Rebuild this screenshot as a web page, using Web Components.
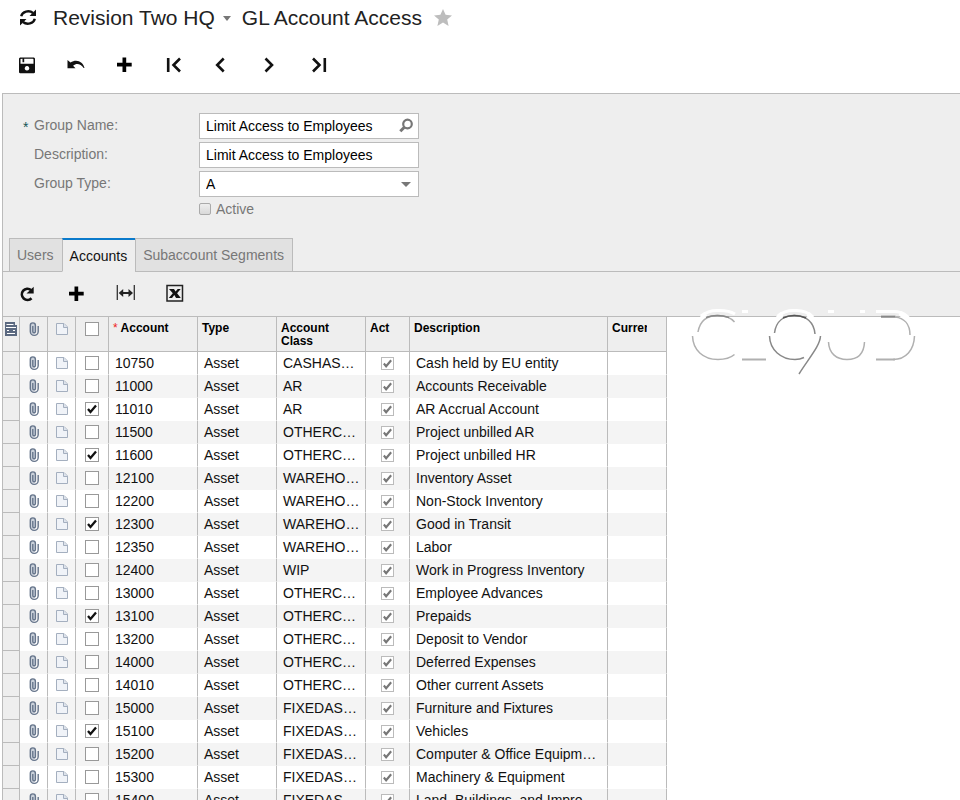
<!DOCTYPE html>
<html lang="en">
<head>
<meta charset="utf-8">
<title>GL Account Access</title>
<style>
html, body { margin: 0; height: 100%; }
body { font-family: "Liberation Sans", Arial, sans-serif; font-size: 14px; color: #111; background: #fff; overflow: hidden; }
</style>
</head>
<body>
<gl-app></gl-app>
<script>
const define = (name, html, setup) => {
  const t = document.createElement('template');
  t.innerHTML = html;
  customElements.define(name, class extends HTMLElement {
    connectedCallback() {
      if (this.shadowRoot) return;
      const root = this.attachShadow({ mode: 'open' });
      root.append(t.content.cloneNode(true));
      if (setup) setup.call(this, root);
    }
  });
};

const ICONS = {
  cycle: '<path fill="none" stroke="#111" stroke-width="2.300" d="M5.200 10.200A7 6 0 0 1 17 7M18.800 12.800A7 6 0 0 1 7 16"/><path d="M20 3.500V10h-6.500zM4 19.500V13h6.500z" fill="#111"/>',
  star: '<path d="M12 3l2.600 5.800 6.400.600-4.800 4.200 1.400 6.400-5.600-3.400L6.400 20l1.400-6.400L3 9.400l6.400-.600z" fill="#bdbdbd"/>',
  save: '<path fill-rule="evenodd" fill="#111" d="M5 4.500h14l1 1v14l-1 .700H5l-1-.700v-14zM5.500 6v4.700h13V6.200l-.800-.500H9.200v3.600H7.500V5.700zM12 13a2.300 2.300 0 1 0 .010 0z"/>',
  undo: '<path fill="#111" d="M3.500 7v8.300h8l-2.400-2.500c3.500-3 7.400-2 10.600 2.200h.800c-1.300-6.500-8-9.500-14-5.600z"/>',
  plus: '<path fill="#000" d="M9.500 4.500h3.700v5.300h5.500v3.700h-5.500V19H9.500v-5.500H4V9.800h5.500z"/>',
  first: '<path fill="none" stroke="#111" stroke-width="2.600" d="M6.200 5v14M18 5.500L11.500 12l6.500 6.500"/>',
  prev: '<path fill="none" stroke="#111" stroke-width="2.600" d="M12.700 5.500L6.200 12l6.500 6.500"/>',
  next: '<path fill="none" stroke="#111" stroke-width="2.600" d="M5.500 5.500L12 12l-6.500 6.500"/>',
  last: '<path fill="none" stroke="#111" stroke-width="2.600" d="M4 5.500L10.500 12 4 18.500M15.800 5v14"/>',
  reload: '<path fill="none" stroke="#111" stroke-width="2.700" d="M15.500 16.300a5.600 5.600 0 1 1-.500-8.300"/><path d="M17.700 4.800V11.500H10.500z" fill="#111"/>',
  fit: '<path fill="none" stroke="#333" stroke-width="1.300" d="M3.300 3v15M20.300 3v15"/><path stroke="#222" stroke-width="2" d="M7 11h10"/><path fill="#222" d="M4.700 11l4.500-4v8zM19 11l-4.500-4v8z"/>',
  excel: '<path fill="none" stroke="#222" stroke-width="1.500" d="M4 3.500h15.500v15.500H4z"/><path fill="#111" d="M6 7h5l1.600 2.600L14.700 7h3l-3.600 4.200 3.700 4.800h-4.700L11.300 13 9 16H5.800l4-4.700z"/>',
  search: '<circle cx="13.500" cy="10" r="4.300" fill="none" stroke="#777" stroke-width="2.200"/><path d="M10.300 13.200L6.300 17.200" stroke="#777" stroke-width="3"/>',
  clip: '<rect x="8" y="6" width="5.500" height="11.500" rx="2.700" fill="#c9d0da"/><path fill="none" stroke="#66758b" stroke-width="1.400" d="M10.800 9v5.500a1.300 1.300 0 0 0 2.600 0V8.400a2.500 2.500 0 0 0-5.100 0v6a3.900 3.900 0 0 0 7.900 0V9"/>',
  note: '<path fill="#f0f3f8" stroke="#a4afbf" stroke-width="1" d="M6.500 6.500h7.500l3.500 3.500v7.500h-11z"/><path fill="#dde3ec" stroke="#a4afbf" d="M13.500 6.500v4h4"/>',
  layout: '<path fill="#5b6980" d="M6 5h10v3h2v3H6zM6 11h12v8H6z"/><path stroke="#fff" d="M7.500 7.500h7M7 10.500h10M8 13.500h8M8 16.500h8"/><path fill="#5b6980" d="M10 12.500h4v1.500h-4z"/>'
};

define('ui-icon', `<style>:host{display:block;width:24px;height:24px;flex:none}svg{display:block;width:100%;height:100%}</style>`, function (r) {
  const d = document.createElement('template');
  d.innerHTML = `<svg viewBox="0 0 24 24" aria-hidden="true">${ICONS[this.getAttribute('name')]}</svg>`;
  r.append(d.content);
});

define('tool-button', `<style>
:host{display:block}
button{display:flex;align-items:center;justify-content:center;width:49px;height:32px;padding:0;border:0;background:none;cursor:pointer}
</style><button type="button"><slot></slot></button>`, function (r) {
  r.querySelector('button').setAttribute('aria-label', this.getAttribute('label'));
});

define('page-title', `<style>
:host{display:flex;align-items:center;height:36px;padding-left:16px;font-size:21px;line-height:24px;color:#222}
button{font:inherit;color:inherit;border:0;background:none;padding:0;display:flex;align-items:center;cursor:pointer}
ui-icon{height:28px}
.company{margin-left:13px;gap:8px}
.company i{border:4px solid transparent;border-top:5px solid #777;border-bottom:0}
h1{font:inherit;margin:0 9px 0 11px}
</style>
<button type="button" aria-label="Refresh page"><ui-icon name="cycle"></ui-icon></button>
<button type="button" class="company">Revision Two HQ<i></i></button>
<h1>GL Account Access</h1>
<button type="button" aria-label="Add to favorites"><ui-icon name="star"></ui-icon></button>`);

define('tool-bar', `<style>:host{display:flex;align-items:center}</style><slot></slot>`);

define('form-field', `<style>
:host{display:grid;grid-template-columns:165px 220px;color:#777;line-height:24px}
label::before{content:attr(data-mark);position:absolute;margin-left:-11px;line-height:28px;color:#155}
.box{position:relative;height:26px}
input,select{box-sizing:border-box;width:100%;height:100%;margin:0;padding:0 6px;border:1px solid #bbb;border-radius:0;background:#fff;font:inherit;color:#000;appearance:none;outline:0}
button,i{position:absolute;right:0;top:0}
button{padding:1px;border:0;background:none}
i{right:8px;top:11px;border:5px solid transparent;border-top-color:#777;border-bottom:0;pointer-events:none}
</style><label for="f"></label><div class="box"></div>`, function (r) {
  const label = r.querySelector('label'), box = r.querySelector('.box');
  const value = this.getAttribute('value'), type = this.getAttribute('type');
  label.textContent = this.getAttribute('label');
  if (this.hasAttribute('required')) label.dataset.mark = '*';
  if (type === 'select') box.innerHTML = `<select id="f"><option>${value}</option></select><i></i>`;
  else box.innerHTML = `<input id="f" type="text" value="${value}">` +
    (type === 'lookup' ? '<button type="button" aria-label="Look up"><ui-icon name="search"></ui-icon></button>' : '');
});

define('active-box', `<style>
:host{display:block;padding-left:165px;color:#777;line-height:18px}
label{display:inline-flex;align-items:center;gap:5px}
input{appearance:none;box-sizing:border-box;width:12px;height:12px;margin:0;border:1px solid #aaa;border-radius:2px;background:linear-gradient(#eee,#d9d9d9)}
</style><label><input type="checkbox">Active</label>`);

define('group-form', `<style>
:host{display:flex;flex-direction:column;gap:3px;padding:19px 0 19px 31px}
</style>
<form-field label="Group Name:" value="Limit Access to Employees" type="lookup" required></form-field>
<form-field label="Description:" value="Limit Access to Employees"></form-field>
<form-field label="Group Type:" value="A" type="select"></form-field>
<active-box></active-box>`);

define('tab-strip', `<style>
:host{display:flex;height:34px;padding-left:6px;box-shadow:inset 0 -1px #bbb}
button{font:inherit;color:#777;background:#e1e1e1;border:1px solid #bbb;padding:0 8px 0 7px;margin:0 0 0 -1px}
button:first-child{margin:0}
button[aria-selected=true]{background:#eee;color:#111;border-top:2px solid #0a7acb;border-bottom-color:#eee}
:host>div,div{display:flex}
</style><div role="tablist"><button role="tab">Users</button><button role="tab" aria-selected="true">Accounts</button><button role="tab">Subaccount Segments</button></div>`);

const ROWS = [
  ['10750', 'CASHAS…', 'Cash held by EU entity'],
  ['11000', 'AR', 'Accounts Receivable'],
  ['11010', 'AR', 'AR Accrual Account', 1],
  ['11500', 'OTHERC…', 'Project unbilled AR'],
  ['11600', 'OTHERC…', 'Project unbilled HR', 1],
  ['12100', 'WAREHO…', 'Inventory Asset'],
  ['12200', 'WAREHO…', 'Non-Stock Inventory'],
  ['12300', 'WAREHO…', 'Good in Transit', 1],
  ['12350', 'WAREHO…', 'Labor'],
  ['12400', 'WIP', 'Work in Progress Inventory'],
  ['13000', 'OTHERC…', 'Employee Advances'],
  ['13100', 'OTHERC…', 'Prepaids', 1],
  ['13200', 'OTHERC…', 'Deposit to Vendor'],
  ['14000', 'OTHERC…', 'Deferred Expenses'],
  ['14010', 'OTHERC…', 'Other current Assets'],
  ['15000', 'FIXEDAS…', 'Furniture and Fixtures'],
  ['15100', 'FIXEDAS…', 'Vehicles', 1],
  ['15200', 'FIXEDAS…', 'Computer &amp; Office Equipm…'],
  ['15300', 'FIXEDAS…', 'Machinery &amp; Equipment'],
  ['15400', 'FIXEDAS…', 'Land, Buildings, and Impro…']
];

define('account-grid', `<style>
:host{display:block;background:#fff;border-top:1px solid #bbb;color:#111}
table{border-collapse:separate;border-spacing:0;table-layout:fixed;width:664px}
th,td{box-sizing:border-box;padding:0;border-right:1px solid #bbb;overflow:hidden;white-space:nowrap;text-align:left}
th{height:35px;background:#eee;border-bottom:1px solid #bbb;font-size:12px;line-height:13px;color:#000;vertical-align:top;padding:5px 0 0 4px}
th.ic{padding:0;text-align:center}
th.clip div{width:35px;overflow:hidden}
th b{color:#e22;font-weight:normal}
td{height:23px;line-height:22px;padding-left:6px;border-bottom:1px solid #fff}
tr:nth-child(even) td{background:#f4f4f4;border-bottom-color:#f4f4f4}
tbody tr td:first-child{background:#eee;border-bottom-color:#bbb}
td.ic{padding:0}
button{display:block;width:100%;height:22px;padding:0;border:0;background:none;overflow:hidden}
ui-icon{margin:-1px auto}
th button{height:24px}
th ui-icon{margin:0 auto}
th:first-child ui-icon{margin-left:-4px}
input{appearance:none;display:block;box-sizing:border-box;width:14px;height:14px;margin:4px 9px;border:1px solid #999;background:#fff}
th input{margin-top:5px}
input:checked{background:#fff url('data:image/svg+xml,<svg xmlns="http://www.w3.org/2000/svg" viewBox="0 0 12 12"><path d="M2 6l2.500 3L10 2.500" fill="none" stroke="%23111" stroke-width="2.300"/></svg>')}
input:disabled{width:13px;height:13px;margin:4px 15px;border-color:#bbb;background-image:url('data:image/svg+xml,<svg xmlns="http://www.w3.org/2000/svg" viewBox="0 0 12 12"><path d="M2 6l2.500 3L10 2.500" fill="none" stroke="%23777" stroke-width="2.300"/></svg>')}
</style>
<table><colgroup><col style="width:17px"><col style="width:28px"><col style="width:28px"><col style="width:33px"><col style="width:89px"><col style="width:79px"><col style="width:89px"><col style="width:44px"><col style="width:198px"><col style="width:59px"></colgroup>
<thead><tr>
<th class="ic"><button type="button" aria-label="Column settings"><ui-icon name="layout"></ui-icon></button></th>
<th class="ic"><button type="button" aria-label="Files"><ui-icon name="clip"></ui-icon></button></th>
<th class="ic"><button type="button" aria-label="Notes"><ui-icon name="note"></ui-icon></button></th>
<th class="ic"><input type="checkbox" aria-label="Select all"></th>
<th><b>*</b> Account</th><th>Type</th><th>Account<br>Class</th><th>Act</th><th>Description</th><th class="clip"><div>Currency</div></th>
</tr></thead><tbody></tbody></table>`, function (r) {
  r.querySelector('tbody').innerHTML = ROWS.map(([no, cls, desc, on]) => `<tr><td class="ic"></td>
<td class="ic"><button type="button" aria-label="Files for ${no}"><ui-icon name="clip"></ui-icon></button></td>
<td class="ic"><button type="button" aria-label="Note for ${no}"><ui-icon name="note"></ui-icon></button></td>
<td class="ic"><input type="checkbox" aria-label="Include ${no}" ${on ? 'checked' : ''}></td>
<td>${no}</td><td>Asset</td><td>${cls}</td>
<td class="ic"><input type="checkbox" aria-label="Active ${no}" checked disabled></td>
<td>${desc}</td><td></td></tr>`).join('');
});

define('cloud-mark', `<style>:host{display:block;width:230px;height:76px;pointer-events:none}svg{display:block}</style>
<svg viewBox="690 306 230 76" width="230" height="76" fill="none" aria-hidden="true">
<g stroke="#fff" stroke-width="3"><path d="M701 316Q709 310 718 310.500Q728 310 735 314M742 311.500h6M778 316Q785 310 795 310.500Q806 310 813 317M828 311.500h6M860 311.500h5M876 311.500h17Q909 311 914 329"/>
<path stroke-width="5" d="M695 337C696 328 701 318 706 314M771 337C772 328 777 318 782 314M818 337C817 328 813 318 808 314M912 336C912 326 907 318 900 313"/></g>
<g stroke="#b0b0b0" stroke-width="1.500"><path d="M698 332C700 320 708 315.500 718 315.500C725 315.500 731 318 734.500 322M692.500 336C693 350 703 359.500 718 359.500C725 359.500 731 357.500 734.500 354.500M828.500 342C829 353 836 359.500 847 359.500C858 359.500 864 353 864.500 342M895 317C904 318 910 324 910 335M914.500 336C914 350 906 359.500 893 359.500"/>
<path stroke-width="2.200" d="M742 359.500h24M876 359.500h19M881 316.800h15"/></g>
<path stroke="#888" stroke-width="1.500" d="M774.500 333C776 321 784 315.500 794.500 315.500C806 315.500 814 322 815 334M769.500 336C770 350 781 359.500 795 359.500C799 359.500 801 359 804 357.500M820.500 336C820 346 809 358 799 374"/>
<path stroke="#888" stroke-width="1.500" d="M706 317.500Q717 313.500 729 317.500M881 316.500h14"/><path stroke="#555" stroke-width="1.600" d="M783 318Q794 313 806 318"/>
</svg>`);

define('gl-app', `<style>
:host{display:flex;flex-direction:column;height:100vh}
header tool-bar{height:57px;padding-left:2px}
main{position:relative;flex:1;min-height:0;margin-left:2px;border:solid #bbb;border-width:1px 0 0 1px;background:#eee;display:flex;flex-direction:column}
main>tool-bar{height:44px;padding-left:0}
account-grid{flex:1;min-height:0;overflow:auto;scrollbar-width:none}
cloud-mark{position:absolute;left:687px;top:212px}
</style>
<header><page-title></page-title>
<tool-bar role="toolbar">
<tool-button label="Save"><ui-icon name="save"></ui-icon></tool-button>
<tool-button label="Undo"><ui-icon name="undo"></ui-icon></tool-button>
<tool-button label="Add"><ui-icon name="plus"></ui-icon></tool-button>
<tool-button label="First"><ui-icon name="first"></ui-icon></tool-button>
<tool-button label="Previous"><ui-icon name="prev"></ui-icon></tool-button>
<tool-button label="Next"><ui-icon name="next"></ui-icon></tool-button>
<tool-button label="Last"><ui-icon name="last"></ui-icon></tool-button>
</tool-bar></header>
<main><group-form></group-form><tab-strip></tab-strip>
<tool-bar role="toolbar">
<tool-button label="Reload"><ui-icon name="reload"></ui-icon></tool-button>
<tool-button label="Add row"><ui-icon name="plus"></ui-icon></tool-button>
<tool-button label="Fit columns"><ui-icon name="fit"></ui-icon></tool-button>
<tool-button label="Export to Excel"><ui-icon name="excel"></ui-icon></tool-button>
</tool-bar>
<account-grid></account-grid><cloud-mark></cloud-mark></main>`);
</script>
</body>
</html>
